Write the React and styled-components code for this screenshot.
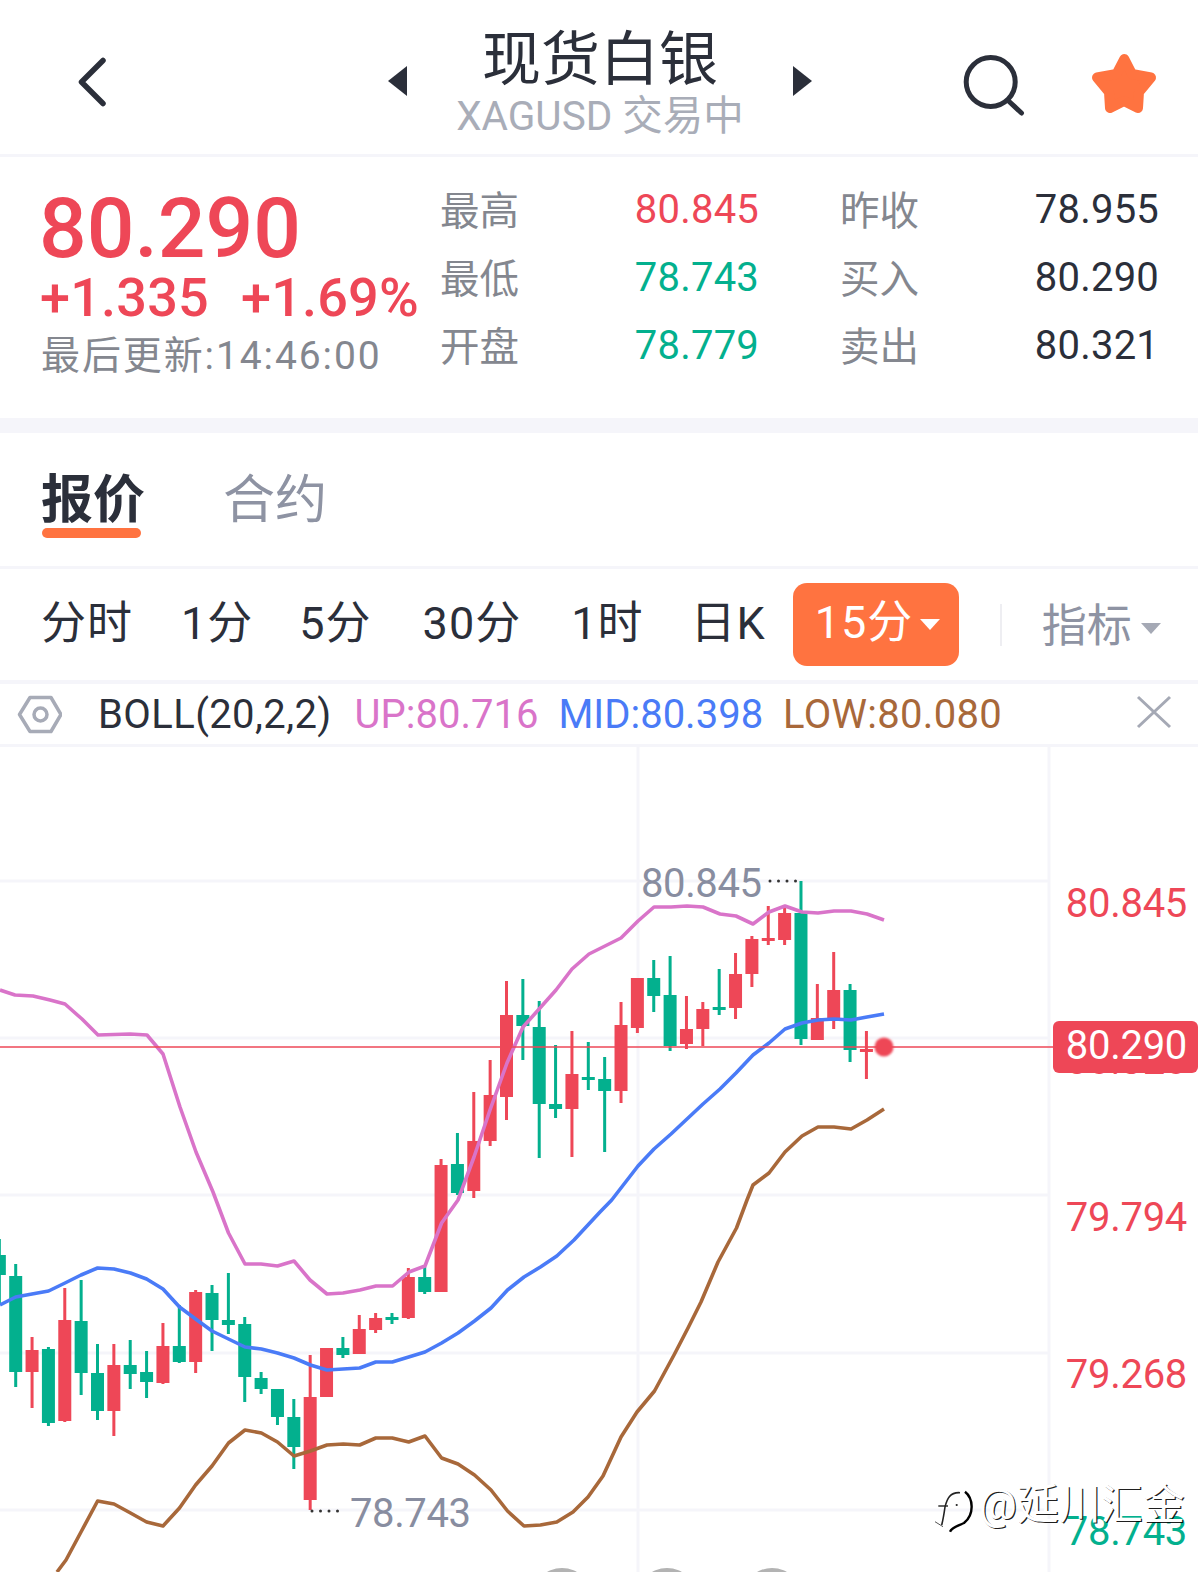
import React from 'react';
import styled, { createGlobalStyle } from 'styled-components';

const RED = '#ee4757';
const GREEN = '#03b08e';
const ORANGE = '#ff7340';
const DARK = '#2b2f3a';
const GRAY = '#84878f';
const LINE = '#f5f5fa';

const GlobalStyle = createGlobalStyle`
    html, body {
        margin: 0;
        padding: 0;
        background: #fff;
    }
    body {
        font-family: Roboto, "Noto Sans CJK SC", sans-serif;
    }
`

const Page = styled.div`
    width: 1198px;
    height: 1572px;
    overflow: hidden;
    background: #fff;
    color: ${DARK};
`

const Header = styled.header`
    display: grid;
    grid-template-columns: 388px 424px 1fr;
    align-items: center;
    height: 157px;
    padding-top: 8px;
    box-sizing: border-box;
    border-bottom: 3px solid ${LINE};
`

const BackCell = styled.div`
    display: flex;
    padding-left: 72px;
    margin-top: 2px;
`

const TitleNav = styled.div`
    display: flex;
    justify-content: space-between;
    align-items: center;
`

const TitleBlock = styled.div`
    display: flex;
    flex-direction: column;
    align-items: center;
    gap: 4px;
    margin: 6px 0 0 0;
`

const Title = styled.h1`
    margin: 0;
    font-size: 59px;
    line-height: 60px;
    font-weight: 400;
`

const SubTitle = styled.div`
    font-size: 40.5px;
    line-height: 44px;
    color: #a9adb8;
`

const Triangle = styled.div`
    width: 0;
    height: 0;
    border-top: 15px solid transparent;
    border-bottom: 15px solid transparent;
    ${p => p.$right
        ? `border-left: 19px solid ${DARK};`
        : `border-right: 19px solid ${DARK};`}
`

const HeaderIcons = styled.div`
    display: flex;
    align-items: center;
    padding-left: 148px;
    gap: 62px;
`

const SearchIcon = styled.svg`
    display: block;
    margin-top: 2px;
`

const StarIcon = styled.svg`
    display: block;
    margin-top: 6px;
`

const Quote = styled.section`
    display: flex;
    justify-content: space-between;
    height: 261px;
    padding: 0 39px 0 42px;
    box-sizing: border-box;
`

const QuoteLeft = styled.div`
    padding-top: 36px;
    display: flex;
    flex-direction: column;
`

const BigPrice = styled.div`
    margin-left: -3px;
    font-size: 84px;
    line-height: 72px;
    font-weight: 500;
    color: ${RED};
`

const ChangeRow = styled.div`
    display: flex;
    gap: 32px;
    margin: 3px 0 0 -2px;
    font-size: 54px;
    line-height: 60px;
    font-weight: 500;
    letter-spacing: 0.2px;
    color: ${RED};
`

const Updated = styled.div`
    margin: 3px 0 0 -1px;
    font-size: 39px;
    line-height: 50px;
    color: ${GRAY};
    letter-spacing: 1.9px;
`

const Stats = styled.div`
    display: grid;
    grid-template-columns: 319px 319px;
    grid-auto-rows: 68px;
    column-gap: 81px;
    padding-top: 19px;
`

const Stat = styled.div`
    display: flex;
    justify-content: space-between;
    align-items: center;
`

const StatLabel = styled.span`
    font-size: 39.5px;
    line-height: 48px;
    margin-top: 4px;
    color: ${GRAY};
`

const StatValue = styled.span`
    font-size: 40px;
    line-height: 48px;
    letter-spacing: 0.2px;
    color: ${p => p.$color || DARK};
`

const Band = styled.div`
    height: 15px;
    background: ${LINE};
`

const Tabs = styled.nav`
    display: flex;
    gap: 78px;
    height: 136px;
    padding: 38px 0 0 41px;
    box-sizing: border-box;
    border-bottom: 3px solid ${LINE};
`

const Tab = styled.div`
    display: flex;
    flex-direction: column;
    font-size: 52px;
    line-height: 60px;
    font-weight: ${p => (p.$active ? 700 : 400)};
    color: ${p => (p.$active ? DARK : '#8e93a3')};
`

const TabBar = styled.div`
    width: 99px;
    height: 10px;
    margin: -3px 0 0 1px;
    border-radius: 5px;
    background: ${ORANGE};
`

const Intervals = styled.div`
    display: flex;
    align-items: center;
    height: 115px;
    padding-left: 41px;
    box-sizing: border-box;
    border-bottom: 4px solid ${LINE};
    font-size: 45px;
    letter-spacing: 1px;
`

const Interval = styled.div`
    margin: 0 ${p => p.$gap}px 2px 0;
    line-height: 60px;
`

const ActiveInterval = styled.div`
    display: flex;
    align-items: center;
    width: 166px;
    height: 83px;
    margin-left: -22px;
    padding: 0 0 12px 22px;
    box-sizing: border-box;
    border-radius: 14px;
    background: ${ORANGE};
    color: #fff;
`

const Caret = styled.div`
    width: 0;
    height: 0;
    margin-top: 12px;
    margin-left: ${p => p.$gap}px;
    border-left: 10px solid transparent;
    border-right: 10px solid transparent;
    border-top: 11px solid ${p => p.$color};
`

const Separator = styled.div`
    width: 2px;
    height: 42px;
    margin: 0 40px 0 41px;
    background: #eeeef2;
`

const Indicator = styled.div`
    display: flex;
    align-items: center;
    padding-bottom: 4px;
    color: #8e93a3;
    letter-spacing: 0;
`

const BollRow = styled.div`
    position: relative;
    display: flex;
    align-items: center;
    height: 63px;
    padding-left: 17px;
    box-sizing: border-box;
    border-bottom: 3px solid ${LINE};
    font-size: 40px;
`

const BollName = styled.span`
    margin-left: 36px;
    margin-right: 23px;
    letter-spacing: 0.4px;
`

const BollValue = styled.span`
    margin-right: ${p => p.$gap}px;
    letter-spacing: ${p => p.$spacing || 0}px;
    color: ${p => p.$color};
`

const CloseIcon = styled.svg`
    display: block;
    position: absolute;
    left: 1135px;
    top: 10px;
`

const Chart = styled.div`
    position: relative;
    height: 825px;
`

const ChartSvg = styled.svg`
    display: block;
`

const AxisLabel = styled.div`
    position: absolute;
    right: 11px;
    top: ${p => p.$top}px;
    font-size: 40px;
    line-height: 40px;
    letter-spacing: -0.3px;
    color: ${p => p.$color};
`

const PriceTag = styled.div`
    position: absolute;
    left: 1053px;
    right: 0;
    top: 274px;
    height: 52px;
    padding-right: 11px;
    box-sizing: border-box;
    border-radius: 6px;
    background: ${RED};
    color: #fff;
    font-size: 40px;
    line-height: 50px;
    letter-spacing: -0.3px;
    text-align: right;
`

const ExtremeLabel = styled.div`
    position: absolute;
    left: ${p => p.$left}px;
    top: ${p => p.$top}px;
    font-size: 40px;
    line-height: 40px;
    letter-spacing: -0.4px;
    color: #888da0;
`

const Watermark = styled.div`
    position: absolute;
    left: 935px;
    top: 736px;
    display: flex;
    align-items: center;
    gap: 4px;
    font-size: 42px;
    line-height: 44px;
    color: #fff;
    text-shadow: 1.2px 0.6px 0 rgba(0, 0, 0, 0.9);
`

// [colour, wick top, body top, body bottom, wick bottom], first one sits at index -1
const candles = [
    ['g', 1239, 1255, 1275, 1305],
    ['g', 1264, 1276, 1372, 1387],
    ['r', 1337, 1350, 1372, 1408],
    ['g', 1347, 1349, 1423, 1426],
    ['r', 1288, 1320, 1421, 1422],
    ['g', 1280, 1321, 1373, 1395],
    ['g', 1344, 1373, 1411, 1420],
    ['r', 1344, 1365, 1411, 1436],
    ['g', 1340, 1365, 1374, 1389],
    ['g', 1351, 1372, 1382, 1398],
    ['r', 1323, 1346, 1383, 1384],
    ['g', 1305, 1346, 1362, 1363],
    ['r', 1290, 1292, 1362, 1373],
    ['g', 1285, 1293, 1320, 1351],
    ['g', 1273, 1320, 1325, 1334],
    ['g', 1317, 1324, 1377, 1402],
    ['g', 1372, 1378, 1389, 1394],
    ['g', 1389, 1389, 1417, 1425],
    ['g', 1399, 1417, 1447, 1469],
    ['r', 1355, 1397, 1500, 1510],
    ['r', 1348, 1348, 1397, 1397],
    ['g', 1337, 1348, 1355, 1358],
    ['r', 1315, 1329, 1354, 1354],
    ['r', 1313, 1318, 1330, 1333],
    ['g', 1313, 1317, 1320, 1324],
    ['r', 1268, 1277, 1318, 1319],
    ['g', 1267, 1277, 1292, 1294],
    ['r', 1159, 1165, 1292, 1292],
    ['g', 1133, 1164, 1193, 1195],
    ['r', 1092, 1141, 1191, 1198],
    ['r', 1060, 1095, 1141, 1146],
    ['r', 981, 1015, 1097, 1120],
    ['g', 979, 1015, 1026, 1060],
    ['g', 1001, 1027, 1104, 1158],
    ['g', 1045, 1104, 1109, 1118],
    ['r', 1031, 1074, 1109, 1157],
    ['g', 1042, 1077, 1080, 1090],
    ['g', 1057, 1079, 1091, 1152],
    ['r', 1002, 1025, 1091, 1103],
    ['r', 978, 978, 1028, 1033],
    ['g', 960, 978, 996, 1012],
    ['g', 956, 995, 1046, 1051],
    ['r', 996, 1029, 1044, 1049],
    ['r', 1002, 1009, 1029, 1046],
    ['g', 969, 1007, 1010, 1015],
    ['r', 953, 974, 1008, 1019],
    ['r', 936, 939, 974, 987],
    ['r', 906, 938, 941, 945],
    ['r', 907, 913, 940, 945],
    ['g', 881, 913, 1039, 1045],
    ['r', 984, 1018, 1040, 1040],
    ['r', 952, 990, 1019, 1029],
    ['g', 984, 990, 1050, 1062],
    ['r', 1031, 1049, 1051, 1079],
];

const upperBand = '0,990 15,995 33,996 50,1000 65,1004 82,1019 98,1035 130,1034 147,1035 163,1054 180,1107 196,1152 213,1192 228.5,1233 245,1264 261,1264 277.5,1266 294,1261 310,1280 327,1294 343,1293 360,1290 376,1286 392.6,1286 409,1272 425,1266 441.6,1223 458,1200 474,1157 490,1110 507,1063 523,1027 540,1008 556,990 572,969 589,954 605,946 621,938 638,921 654,907 671,907 687,906 703,907 720,914 736,916 753,924 769,912 785,906 802,912 818,913 834,911 851,911 867,914 884,920';
const middleBand = '0,1305 15.7,1297 32,1294 48.6,1291 65,1283 81,1275 97.6,1268 114,1269 130.5,1273 146.6,1279 163,1289 179.5,1307 195.6,1319 212,1331 228.5,1339 245,1347 261.4,1349 277.5,1353 294,1358 310.4,1365 327,1370 343,1369 359.7,1368 375.8,1362 392.3,1362 408.7,1357 425,1352 441.6,1343 458,1333 474.5,1321 491,1308 507.5,1290 524,1277 540.4,1267 556.8,1256 574,1240 600,1212 611.7,1200 638,1166 654,1149 671,1134 687,1119 703,1104 720,1089 736,1073 753,1055 769,1043 785,1029 802,1023 818,1020 834,1019 851,1020 867,1017 884,1014';
const lowerBand = '57,1572 66,1560 81,1532 97.6,1501 114,1504 130.5,1513 146.6,1522 163,1526 179.5,1508 195.6,1485 212,1466 228.5,1443 245,1430 261.4,1433 277.5,1442 294,1456 310.4,1451 327,1445 343.3,1444 359.7,1445 375.8,1438 392.3,1438 408.7,1442 425,1436 441.6,1458 458,1464 474.5,1475 491,1490 507.5,1511 524,1526 540.4,1525 556.8,1522 573,1512 588,1497 603,1476 621,1437 637,1412 654.5,1391 674,1355 688,1328 701,1302 718,1262 736.5,1228 747,1200 753,1185 769,1173 785,1152 802,1136 818,1127 834,1127 851,1129 867,1120 884,1109';

const gridRows = [881, 1038, 1195, 1353, 1510];
const gridCols = [638, 1049];

const stats = [
    ['最高', '80.845', RED],
    ['昨收', '78.955'],
    ['最低', '78.743', GREEN],
    ['买入', '80.290'],
    ['开盘', '78.779', GREEN],
    ['卖出', '80.321'],
];

const intervals = [
    ['分时', 48],
    ['1分', 46],
    ['5分', 51],
    ['30分', 50],
    ['1时', 47],
    ['日K', 49],
];

function CandleChart() {
    return (
        <ChartSvg width="1198" height="825" viewBox="0 747 1198 825">
            <defs>
                <filter id="dotBlur" x="-50%" y="-50%" width="200%" height="200%">
                    <feGaussianBlur stdDeviation="1.3" />
                </filter>
            </defs>
            {gridRows.map(y => (
                <line key={y} x1="0" x2="1049" y1={y} y2={y} stroke={LINE} strokeWidth="3" />
            ))}
            {gridCols.map(x => (
                <line key={x} x1={x} x2={x} y1="747" y2="1572" stroke={LINE} strokeWidth="3" />
            ))}
            {candles.map(([c, wickTop, top, bottom, wickBottom], i) => {
                const x = 15.7 + 16.36 * (i - 1);
                const fill = c === 'r' ? RED : GREEN;
                return (
                    <g key={i} fill={fill}>
                        <rect x={x - 1.5} y={wickTop} width="3" height={wickBottom - wickTop} />
                        <rect x={x - 6.5} y={top} width="13" height={Math.max(bottom - top, 3)} />
                    </g>
                );
            })}
            <polyline points={upperBand} fill="none" stroke="#d974c9" strokeWidth="3.6" strokeLinejoin="round" />
            <polyline points={middleBand} fill="none" stroke="#4a7bf7" strokeWidth="3.6" strokeLinejoin="round" />
            <polyline points={lowerBand} fill="none" stroke="#a8683a" strokeWidth="3.6" strokeLinejoin="round" />
            <line x1="0" x2="1053" y1="1047" y2="1047" stroke={RED} strokeWidth="1.5" />
            <circle cx="884" cy="1047" r="9.5" fill={RED} filter="url(#dotBlur)" />
            <line x1="770" x2="802" y1="881" y2="881" stroke="#333" strokeWidth="3" strokeLinecap="round" strokeDasharray="0 8.5" />
            <line x1="312" x2="345" y1="1511" y2="1511" stroke="#333" strokeWidth="3" strokeLinecap="round" strokeDasharray="0 8.5" />
            <circle cx="562" cy="1598" r="30" fill="#b3b3b3" />
            <circle cx="667" cy="1598" r="30" fill="#b3b3b3" />
            <circle cx="772" cy="1598" r="30" fill="#b3b3b3" />
        </ChartSvg>
    );
}

export default function App() {
    return (
        <Page>
            <GlobalStyle />
            <Header>
                <BackCell>
                    <svg width="38" height="56" viewBox="72 54 38 56">
                        <polyline points="103,60.5 81.5,82 103,103.5" fill="none" stroke={DARK} strokeWidth="5.5" strokeLinecap="round" strokeLinejoin="round" />
                    </svg>
                </BackCell>
                <TitleNav>
                    <Triangle />
                    <TitleBlock>
                        <Title>现货白银</Title>
                        <SubTitle>XAGUSD 交易中</SubTitle>
                    </TitleBlock>
                    <Triangle $right />
                </TitleNav>
                <HeaderIcons>
                    <SearchIcon width="66" height="68" viewBox="960 48 66 68">
                        <circle cx="990.7" cy="82" r="24.5" fill="none" stroke={DARK} strokeWidth="5" />
                        <line x1="1008" y1="100.5" x2="1021.5" y2="113" stroke={DARK} strokeWidth="5" strokeLinecap="round" />
                    </SearchIcon>
                    <StarIcon width="72" height="70" viewBox="1088 49 72 70">
                        <polygon
                            points="1124.3,59 1132,74 1151,77.5 1139,92 1138,108 1124,101 1110,108 1109,92 1097,77.5 1116.5,74"
                            fill={ORANGE}
                            stroke={ORANGE}
                            strokeWidth="10"
                            strokeLinejoin="round"
                        />
                    </StarIcon>
                </HeaderIcons>
            </Header>

            <Quote>
                <QuoteLeft>
                    <BigPrice>80.290</BigPrice>
                    <ChangeRow>
                        <span>+1.335</span>
                        <span>+1.69%</span>
                    </ChangeRow>
                    <Updated>最后更新:14:46:00</Updated>
                </QuoteLeft>
                <Stats>
                    {stats.map(([label, value, color]) => (
                        <Stat key={label}>
                            <StatLabel>{label}</StatLabel>
                            <StatValue $color={color}>{value}</StatValue>
                        </Stat>
                    ))}
                </Stats>
            </Quote>
            <Band />

            <Tabs>
                <Tab $active>
                    报价
                    <TabBar />
                </Tab>
                <Tab>合约</Tab>
            </Tabs>

            <Intervals>
                {intervals.map(([name, gap]) => (
                    <Interval key={name} $gap={gap}>{name}</Interval>
                ))}
                <ActiveInterval>
                    15分
                    <Caret $gap={7} $color="#fff" />
                </ActiveInterval>
                <Separator />
                <Indicator>
                    指标
                    <Caret $gap={9} $color="#a5a9b5" />
                </Indicator>
            </Intervals>

            <BollRow>
                <svg width="45" height="40" viewBox="16 695 45 40">
                    <polygon points="18.5,715.5 29,698.5 50,698.5 60,715.5 50,732.5 29,732.5" fill="none" stroke="#a7abb7" strokeWidth="3.5" strokeLinejoin="round" />
                    <circle cx="39.5" cy="715.5" r="6.5" fill="none" stroke="#a7abb7" strokeWidth="3.5" />
                </svg>
                <BollName>BOLL(20,2,2)</BollName>
                <BollValue $color="#d974c9" $gap={20}>UP:80.716</BollValue>
                <BollValue $color="#4a7bf7" $gap={20}>MID:80.398</BollValue>
                <BollValue $color="#a8683a" $gap={0} $spacing={0.3}>LOW:80.080</BollValue>
                <CloseIcon width="38" height="36" viewBox="1135 694 38 36">
                    <path d="M1138 697 L1170 727 M1170 697 L1138 727" fill="none" stroke="#a5a9b5" strokeWidth="3" />
                </CloseIcon>
            </BollRow>

            <Chart>
                <CandleChart />
                <ExtremeLabel $left={641} $top={117}>80.845</ExtremeLabel>
                <ExtremeLabel $left={350} $top={747}>78.743</ExtremeLabel>
                <AxisLabel $top={137} $color={RED}>80.845</AxisLabel>
                <AxisLabel $top={451} $color={RED}>79.794</AxisLabel>
                <AxisLabel $top={608} $color={RED}>79.268</AxisLabel>
                <AxisLabel $top={765} $color={GREEN}>78.743</AxisLabel>
                <AxisLabel $top={294} $color={RED}>80.320</AxisLabel>
                <PriceTag>80.290</PriceTag>
                <Watermark>
                    <svg width="40" height="44" viewBox="0 -7 40 44" overflow="visible">
                        <path d="M25 2.7 C15 2 12 9 10 17 C9 24 8 30 6.7 35" fill="none" stroke="#222" strokeWidth="1.6" />
                        <path d="M3.3 16 L13 16" fill="none" stroke="#222" strokeWidth="1.4" />
                        <path d="M0 31.7 L8 36.7" fill="none" stroke="#555" strokeWidth="1" />
                        <path d="M30 1.7 C38 8 40 24 29 33 C23 36 17 37 15 41.7" fill="none" stroke="#000" strokeWidth="2.4" />
                        <circle cx="21.7" cy="15" r="1.1" fill="#222" />
                    </svg>
                    @延川汇金
                </Watermark>
            </Chart>
        </Page>
    );
}
